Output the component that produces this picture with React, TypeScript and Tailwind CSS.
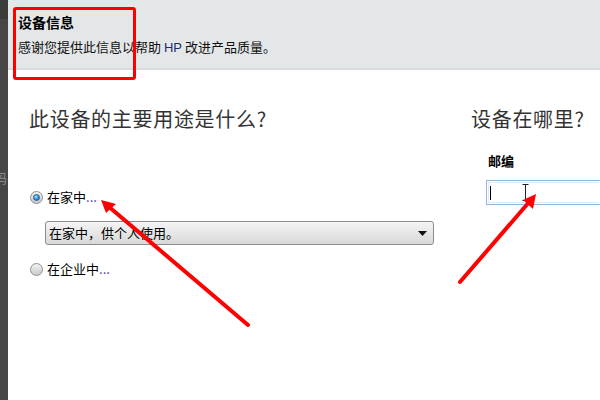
import React from "react";

const cjk = { fontFamily: '"Noto Sans CJK SC", "Liberation Sans", sans-serif' };

function Radio({ checked }: { checked?: boolean }) {
  return (
    <span className="w-[13px] h-[13px] rounded-full border border-[#8f8f8f] bg-linear-to-b from-[#f2f2f2] to-[#c9c9c9] flex items-center justify-center shrink-0">
      {checked && (
        <span className="w-[7px] h-[7px] rounded-full bg-[radial-gradient(circle_at_40%_35%,#bfe6ff,#2f8fdc_55%,#0d4f94)] border border-[#1d5f9c]" />
      )}
    </span>
  );
}

export default function App() {
  return (
    <div className="relative w-[600px] h-[400px] overflow-hidden flex bg-white" style={cjk}>
      {/* left dark strip */}
      <div className="w-[8px] flex flex-col overflow-hidden">
        <div className="h-[19px] bg-[#3b3b3b]" />
        <div className="flex-1 bg-[#464646] relative overflow-hidden">
          <span className="absolute top-[152px] left-0 text-[13px] leading-none text-[#8a8a8a] -translate-x-[6px]">码</span>
        </div>
      </div>

      <div className="flex-1 flex flex-col">
        {/* header */}
        <div className="h-[70px] bg-[#e4e7e8] border-b-2 border-[#d9dbdc] pl-[10px] pt-[13px]">
          <div className="text-[14px] leading-[19px] font-bold text-black">设备信息</div>
          <div className="text-[13px] leading-[19px] mt-[5px] text-[#111]">
            感谢您提供此信息以帮助 <span className="text-[#1e2a6e]" style={{ fontFamily: '"Liberation Sans", sans-serif' }}>HP</span> 改进产品质量。
          </div>
        </div>

        {/* content */}
        <div className="flex-1 flex pt-[37px]">
          <div className="w-[463px] pl-[21px] flex flex-col">
            <div className="text-[20px] leading-[24px] tracking-[0.7px] text-[#333333]">此设备的主要用途是什么?</div>

            <div className="mt-[58px] flex items-center gap-[4px] h-[16px] pl-[1px]">
              <Radio checked />
              <span className="text-[13px] leading-[16px] text-black">
                在家中<span className="text-[#3a3a9a]">...</span>
              </span>
            </div>

            <div className="mt-[16px] ml-[16px] w-[389px] h-[24px] border border-[#8c8c8c] rounded-[3px] bg-linear-to-b from-[#f5f5f5] to-[#d8d8d8] flex items-center justify-between pl-[3px] pr-[6px]">
              <span className="text-[13px] leading-[16px] text-black">在家中，供个人使用。</span>
              <svg width="9" height="5" viewBox="0 0 9 5">
                <path d="M0 0 H9 L4.5 5 Z" fill="#111" />
              </svg>
            </div>

            <div className="mt-[16px] flex items-center gap-[4px] h-[16px] pl-[1px]">
              <Radio />
              <span className="text-[13px] leading-[16px] text-black">
                在企业中<span className="text-[#3a3a9a]">...</span>
              </span>
            </div>
          </div>

          <div className="flex-1 flex flex-col">
            <div className="text-[20px] leading-[24px] tracking-[0.7px] text-[#333333]">设备在哪里?</div>
            <div className="mt-[21px] ml-[17px] text-[13px] leading-[18px] font-bold text-black">邮编</div>
            <div className="mt-[10px] ml-[15px] h-[25px] border border-[#8fb5da] border-r-0 bg-white flex items-center relative">
              <div className="absolute inset-[1px] border border-[#dcebf7] border-r-0" />
              <span className="ml-[3px] w-[1px] h-[14px] bg-black" />
              <svg className="ml-[31px]" width="7" height="17" viewBox="0 0 7 17">
                <path d="M0.5 0.5 H6.5 M3.5 0.5 V16.5 M0.5 16.5 H6.5" stroke="#222" strokeWidth="1" fill="none" />
              </svg>
            </div>
          </div>
        </div>
      </div>

      {/* red annotation box */}
      <div className="absolute left-[13px] top-[7px] w-[123px] h-[73px] border-[3px] border-[#ff0000] rounded-[3px] pointer-events-none" />

      {/* red arrows */}
      <svg className="absolute inset-0 pointer-events-none" width="600" height="400" viewBox="0 0 600 400">
        <line x1="248" y1="325" x2="108" y2="206" stroke="#ff0000" strokeWidth="4" strokeLinecap="round" />
        <polygon points="101,200 116,204 106,213" fill="#ff0000" />
        <line x1="460" y1="282" x2="530" y2="201" stroke="#ff0000" strokeWidth="4" strokeLinecap="round" />
        <polygon points="536,194 533,209 523,200" fill="#ff0000" />
      </svg>
    </div>
  );
}
